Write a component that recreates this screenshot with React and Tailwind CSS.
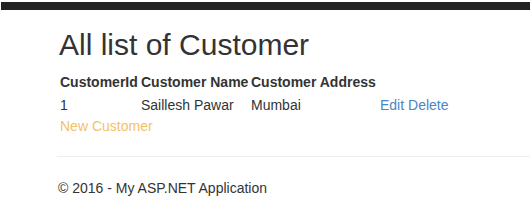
export default function App() {
  return (
    <div className="w-[530px] h-[222px] bg-white overflow-hidden text-[#333] text-[14px] leading-[20px]" style={{ fontFamily: '"Liberation Sans", Arial, sans-serif' }}>
      <div className="h-[2px]" />
      <div className="h-[8px] ml-[1px] bg-[#222]" />
      <div className="pl-[57px]">
        <h2 className="mt-[18px] pl-[2px] text-[30px] leading-[33px] font-normal text-[#333]">All list of Customer</h2>
        <table className="mt-[11px] ml-[3px] border-collapse">
          <thead>
            <tr className="h-[23px] align-top">
              <th className="w-[81px] p-0 text-left font-bold">CustomerId</th>
              <th className="w-[110px] p-0 text-left font-bold">Customer Name</th>
              <th className="w-[129px] p-0 text-left font-bold">Customer Address</th>
              <th className="p-0"></th>
            </tr>
          </thead>
          <tbody>
            <tr className="h-[21px] align-top">
              <td className="p-0">1</td>
              <td className="p-0">Saillesh Pawar</td>
              <td className="p-0">Mumbai</td>
              <td className="p-0 text-[#4a86c4]">
                <a href="#" className="text-[#4a86c4]">Edit</a> <a href="#" className="text-[#4a86c4]">Delete</a>
              </td>
            </tr>
          </tbody>
        </table>
        <div className="pl-[3px]">
          <a href="#" className="text-[#f2c26b]">New Customer</a>
        </div>
        <div className="mt-[20px] border-t border-[#eee]" />
        <div className="mt-[21px] pl-[1px]">© 2016 - My ASP.NET Application</div>
      </div>
    </div>
  );
}
